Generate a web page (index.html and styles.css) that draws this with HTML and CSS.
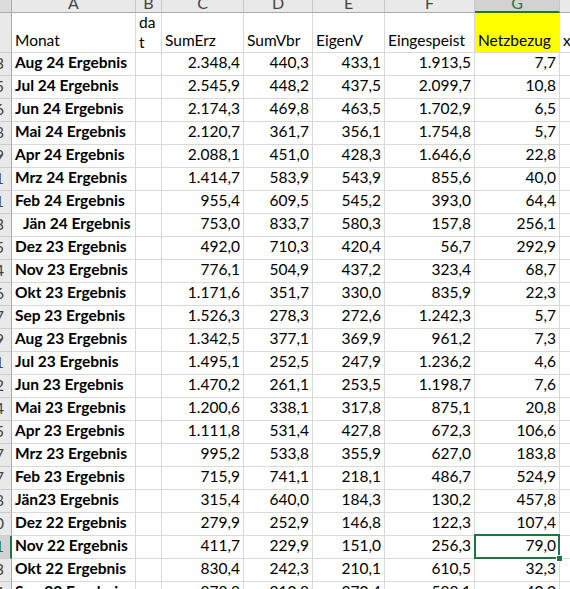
FILE: index.html
```html
<!DOCTYPE html>
<html lang="de">
<head>
<meta charset="utf-8">
<title>Netzbezug</title>
<link rel="stylesheet" href="styles.css">
</head>
<body>
<div class="sheet">
  <div class="row">
    <div class="corner"></div>
    <div class="col">A</div>
    <div class="col">B</div>
    <div class="col">C</div>
    <div class="col">D</div>
    <div class="col">E</div>
    <div class="col">F</div>
    <div class="col col-sel">G</div>
    <div class="col">H</div>
  </div>
  <div class="row">
    <div class="rn"></div>
    <div class="hd">Monat</div>
    <div class="hd hd-wrap">da<br>t</div>
    <div class="hd">SumErz</div>
    <div class="hd">SumVbr</div>
    <div class="hd">EigenV</div>
    <div class="hd">Eingespeist</div>
    <div class="hd yel">Netzbezug</div>
    <div class="hd">x</div>
  </div>
  <div class="row"><div class="rn">103</div><div class="lbl">Aug 24 Ergebnis</div><div class="b"></div><div class="num">2.348,4</div><div class="num">440,3</div><div class="num">433,1</div><div class="num">1.913,5</div><div class="num">7,7</div><div class="h"></div></div>
  <div class="row"><div class="rn">105</div><div class="lbl">Jul 24 Ergebnis</div><div class="b"></div><div class="num">2.545,9</div><div class="num">448,2</div><div class="num">437,5</div><div class="num">2.099,7</div><div class="num">10,8</div><div class="h"></div></div>
  <div class="row"><div class="rn">106</div><div class="lbl">Jun 24 Ergebnis</div><div class="b"></div><div class="num">2.174,3</div><div class="num">469,8</div><div class="num">463,5</div><div class="num">1.702,9</div><div class="num">6,5</div><div class="h"></div></div>
  <div class="row"><div class="rn">108</div><div class="lbl">Mai 24 Ergebnis</div><div class="b"></div><div class="num">2.120,7</div><div class="num">361,7</div><div class="num">356,1</div><div class="num">1.754,8</div><div class="num">5,7</div><div class="h"></div></div>
  <div class="row"><div class="rn">109</div><div class="lbl">Apr 24 Ergebnis</div><div class="b"></div><div class="num">2.088,1</div><div class="num">451,0</div><div class="num">428,3</div><div class="num">1.646,6</div><div class="num">22,8</div><div class="h"></div></div>
  <div class="row"><div class="rn">111</div><div class="lbl">Mrz 24 Ergebnis</div><div class="b"></div><div class="num">1.414,7</div><div class="num">583,9</div><div class="num">543,9</div><div class="num">855,6</div><div class="num">40,0</div><div class="h"></div></div>
  <div class="row"><div class="rn">121</div><div class="lbl">Feb 24 Ergebnis</div><div class="b"></div><div class="num">955,4</div><div class="num">609,5</div><div class="num">545,2</div><div class="num">393,0</div><div class="num">64,4</div><div class="h"></div></div>
  <div class="row"><div class="rn">123</div><div class="lbl lbl-ind">Jän 24 Ergebnis</div><div class="b"></div><div class="num">753,0</div><div class="num">833,7</div><div class="num">580,3</div><div class="num">157,8</div><div class="num">256,1</div><div class="h"></div></div>
  <div class="row"><div class="rn">125</div><div class="lbl">Dez 23 Ergebnis</div><div class="b"></div><div class="num">492,0</div><div class="num">710,3</div><div class="num">420,4</div><div class="num">56,7</div><div class="num">292,9</div><div class="h"></div></div>
  <div class="row"><div class="rn">134</div><div class="lbl">Nov 23 Ergebnis</div><div class="b"></div><div class="num">776,1</div><div class="num">504,9</div><div class="num">437,2</div><div class="num">323,4</div><div class="num">68,7</div><div class="h"></div></div>
  <div class="row"><div class="rn">136</div><div class="lbl">Okt 23 Ergebnis</div><div class="b"></div><div class="num">1.171,6</div><div class="num">351,7</div><div class="num">330,0</div><div class="num">835,9</div><div class="num">22,3</div><div class="h"></div></div>
  <div class="row"><div class="rn">137</div><div class="lbl">Sep 23 Ergebnis</div><div class="b"></div><div class="num">1.526,3</div><div class="num">278,3</div><div class="num">272,6</div><div class="num">1.242,3</div><div class="num">5,7</div><div class="h"></div></div>
  <div class="row"><div class="rn">139</div><div class="lbl">Aug 23 Ergebnis</div><div class="b"></div><div class="num">1.342,5</div><div class="num">377,1</div><div class="num">369,9</div><div class="num">961,2</div><div class="num">7,3</div><div class="h"></div></div>
  <div class="row"><div class="rn">141</div><div class="lbl">Jul 23 Ergebnis</div><div class="b"></div><div class="num">1.495,1</div><div class="num">252,5</div><div class="num">247,9</div><div class="num">1.236,2</div><div class="num">4,6</div><div class="h"></div></div>
  <div class="row"><div class="rn">142</div><div class="lbl">Jun 23 Ergebnis</div><div class="b"></div><div class="num">1.470,2</div><div class="num">261,1</div><div class="num">253,5</div><div class="num">1.198,7</div><div class="num">7,6</div><div class="h"></div></div>
  <div class="row"><div class="rn">144</div><div class="lbl">Mai 23 Ergebnis</div><div class="b"></div><div class="num">1.200,6</div><div class="num">338,1</div><div class="num">317,8</div><div class="num">875,1</div><div class="num">20,8</div><div class="h"></div></div>
  <div class="row"><div class="rn">145</div><div class="lbl">Apr 23 Ergebnis</div><div class="b"></div><div class="num">1.111,8</div><div class="num">531,4</div><div class="num">427,8</div><div class="num">672,3</div><div class="num">106,6</div><div class="h"></div></div>
  <div class="row"><div class="rn">147</div><div class="lbl">Mrz 23 Ergebnis</div><div class="b"></div><div class="num">995,2</div><div class="num">533,8</div><div class="num">355,9</div><div class="num">627,0</div><div class="num">183,8</div><div class="h"></div></div>
  <div class="row"><div class="rn">157</div><div class="lbl">Feb 23 Ergebnis</div><div class="b"></div><div class="num">715,9</div><div class="num">741,1</div><div class="num">218,1</div><div class="num">486,7</div><div class="num">524,9</div><div class="h"></div></div>
  <div class="row"><div class="rn">158</div><div class="lbl">Jän23 Ergebnis</div><div class="b"></div><div class="num">315,4</div><div class="num">640,0</div><div class="num">184,3</div><div class="num">130,2</div><div class="num">457,8</div><div class="h"></div></div>
  <div class="row"><div class="rn">160</div><div class="lbl">Dez 22 Ergebnis</div><div class="b"></div><div class="num">279,9</div><div class="num">252,9</div><div class="num">146,8</div><div class="num">122,3</div><div class="num">107,4</div><div class="h"></div></div>
  <div class="row"><div class="rn rn-on">161</div><div class="lbl">Nov 22 Ergebnis</div><div class="b"></div><div class="num">411,7</div><div class="num">229,9</div><div class="num">151,0</div><div class="num">256,3</div><div class="num cur">79,0</div><div class="h"></div></div>
  <div class="row"><div class="rn">163</div><div class="lbl">Okt 22 Ergebnis</div><div class="b"></div><div class="num">830,4</div><div class="num">242,3</div><div class="num">210,1</div><div class="num">610,5</div><div class="num">32,3</div><div class="h"></div></div>
  <div class="row"><div class="rn">164</div><div class="lbl">Sep 22 Ergebnis</div><div class="b"></div><div class="num">878,8</div><div class="num">210,8</div><div class="num">370,4</div><div class="num">588,1</div><div class="num">40,0</div><div class="h"></div></div>
</div>
</body>
</html>
```

FILE: styles.css
```css
html, body {
  margin: 0;
  padding: 0;
  background: #ffffff;
  overflow: hidden;
}

body {
  font-family: Lato, "Liberation Sans", sans-serif;
  font-size: 15.5px;
  color: #000000;
}

.sheet {
  display: grid;
  grid-template-columns: 12px 124px 26px 82px 69px 72px 90px 85px 60px;
  grid-template-rows: 13px 40px;
  grid-auto-rows: 23px;
  width: max-content;
}

.row {
  display: contents;
}

.row > div {
  box-sizing: border-box;
  border-right: 1px solid #d9d9d9;
  border-bottom: 1px solid #d9d9d9;
  overflow: hidden;
  white-space: nowrap;
  line-height: 19px;
}

/* column letter header */
.row > .corner {
  background: #dcdcdc;
  border-right-color: #ababab;
  border-bottom-color: #ababab;
}

.row > .col {
  background: #e9e9e9;
  border-right-color: #c8c8c8;
  border-bottom-color: #ababab;
  color: #444444;
  font-size: 16px;
  line-height: 6px;
  text-align: center;
}

.row > .col-sel {
  background: #d2d2d2;
  color: #217346;
  border-bottom: 2px solid #217346;
}

/* row numbers */
.row > .rn {
  background: #e9e9e9;
  border-right-color: #ababab;
  border-bottom-color: #cdcdcd;
  color: #444444;
  font-size: 16px;
  display: flex;
  justify-content: flex-end;
  padding-right: 7px;
}

.row > .rn-on {
  background: #d2d2d2;
  color: #217346;
  border-right: 2px solid #217346;
  padding-right: 6px;
}

/* header row */
.row > .hd {
  display: flex;
  align-items: flex-end;
  padding: 0 3px 2px 3px;
}

.row > .hd-wrap {
  white-space: normal;
  line-height: 20px;
  padding-bottom: 0;
}

.row > .yel {
  background: #ffff00;
  border-right-color: #ffff00;
}

/* data */
.row > .lbl {
  font-weight: 700;
  padding-left: 3px;
}

.row > .lbl-ind {
  padding-left: 11px;
}

.row > .num {
  text-align: right;
  padding-right: 3px;
}

/* active cell */
.row > .cur {
  position: relative;
  overflow: visible;
}

.cur::before {
  content: "";
  position: absolute;
  left: -1px;
  top: -2px;
  right: -1px;
  bottom: -1px;
  border: 2px solid #217346;
}

.cur::after {
  content: "";
  position: absolute;
  right: -3px;
  bottom: -3px;
  width: 5px;
  height: 5px;
  background: #217346;
  box-shadow: 0 0 0 1px #ffffff;
}
```
